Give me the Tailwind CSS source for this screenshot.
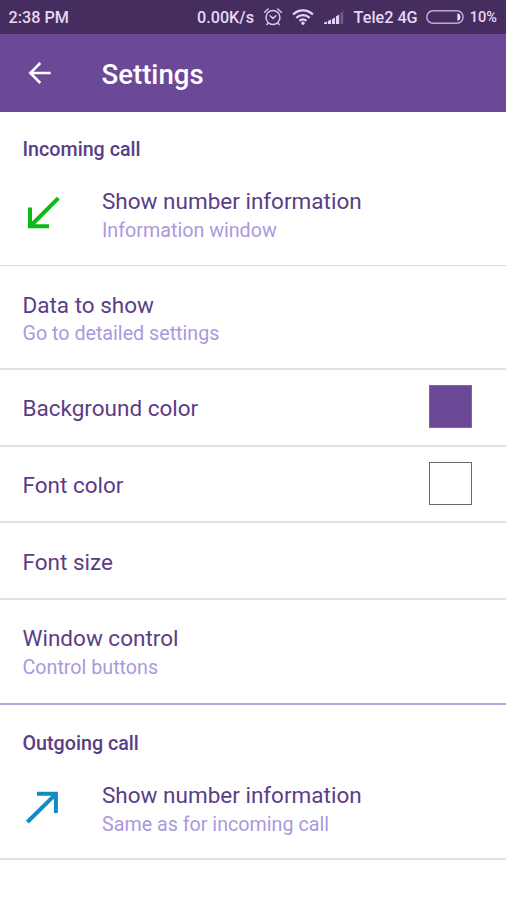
<!DOCTYPE html>
<html lang="en">
<head>
<meta charset="utf-8">
<title>Settings</title>
<script src="https://cdn.jsdelivr.net/npm/@tailwindcss/browser@4"></script>
</head>
<body class="bg-white">
<div class="flex h-[900px] w-[506px] flex-col overflow-hidden bg-white font-[Roboto,sans-serif] text-[#5b3d86]">
  <div class="flex h-[34px] shrink-0 items-center bg-[#452d60] pt-[2px] pr-[9px] pl-[8.5px] text-[16.2px] font-medium whitespace-nowrap text-[#e6d8f5]">
    <span class="w-[189px]">2:38 PM</span>
    <span class="w-[66px]">0.00K/s</span>
    <svg class="-mt-[3px] h-[20px] w-[20px]" viewBox="0 0 20 20" fill="none" stroke="#d9c8ec" stroke-width="1.5" stroke-linecap="round"><circle cx="10" cy="10.5" r="7"/><path d="M1.6 5.2 5.2 2M18.4 5.2 14.8 2M7 8.8 10 11.4 13 8.8M5 16 3.8 17.6M15 16l1.2 1.6"/></svg>
    <svg class="-mt-[3px] ml-[9px] h-[18px] w-[22px]" viewBox="0 0 22 18" fill="none" stroke="#e3d5f2" stroke-width="2.3"><path d="M1 6.5C6.8 1 15.2 1 21 6.5M4.3 9.8c4-3.7 9.4-3.7 13.4 0M7.5 12.9c2.2-1.9 4.8-1.9 7 0"/><circle cx="11" cy="15.2" r="1.7" fill="#e3d5f2" stroke="none"/></svg>
    <svg class="-mt-[2px] ml-[10px] h-[16px] w-[21px]" viewBox="0 0 21 16" fill="#e3d5f2"><path d="M0 15v-1.2L3 12.6V15zM4 15v-3l3-1.4V15zM8 15v-4.8l3-1.6V15zM12 15V7.6l3.2-2.2V15z"/><path d="M16.6 4.2 19.2 2v13h-2.6z" fill="#735c8c"/></svg>
    <span class="ml-[9px] w-[72.5px]">Tele2 4G</span>
    <svg class="-mt-[2px] h-[14px] w-[38px]" viewBox="0 0 38 14"><rect x=".8" y=".8" width="36.4" height="12.4" rx="6.2" fill="none" stroke="#bda9d3" stroke-width="1.5"/><path d="M31.5 3.2c4 .3 4 7.3 0 7.6z" fill="#f2eafa"/></svg>
    <span class="ml-[6px] text-[14.5px]">10%</span>
  </div>

  <header class="flex h-[78px] shrink-0 items-center bg-[#6c4996] text-white">
    <svg class="ml-[28px] h-[24px] w-[24px]" viewBox="0 0 24 24" fill="none" stroke="#fff" stroke-width="2.5"><path d="M22.7 12H2.5M12.3 2 2.3 12l10 10"/></svg>
    <h1 class="ml-[49.5px] pt-1 text-[27.6px] leading-8 font-medium">Settings</h1>
  </header>

  <section class="h-[154px] shrink-0 border-b border-[#d9d9d9] pt-[24px] pl-[22.5px]">
    <h2 class="text-[19.7px] leading-7 font-medium">Incoming call</h2>
    <div class="mt-6 flex">
      <svg class="mt-[7px] ml-[4.5px] h-[36px] w-[36px]" viewBox="0 0 36 36" fill="none" stroke="#0cbb12" stroke-width="4"><path d="M31.3 3.2 3.5 31M3 12.5v18.7h19"/></svg>
      <div class="-mt-px ml-[39px] leading-[29px]"><p class="text-[22.5px]">Show number information</p><p class="text-[19.7px] text-[#ab99dc]">Information window</p></div>
    </div>
  </section>

  <div class="h-[104px] shrink-0 border-b-2 border-[#e2e2e2] pt-[25px] pl-[22.5px]"><p class="text-[22.5px] leading-[29px]">Data to show</p><p class="text-[19.7px] leading-[28px] text-[#ab99dc]">Go to detailed settings</p></div>

  <div class="flex h-[77px] shrink-0 items-center justify-between border-b-2 border-[#e2e2e2] pr-[34px] pl-[22.5px]"><p class="pt-[3px] text-[22.5px]">Background color</p><span class="mb-[2px] h-[43px] w-[43px] border border-[#77707f] bg-[#6c4996]"></span></div>
  <div class="flex h-[76px] shrink-0 items-center justify-between border-b-2 border-[#e2e2e2] pr-[34px] pl-[22.5px]"><p class="pt-[4px] text-[22.5px]">Font color</p><span class="mb-[2px] h-[43px] w-[43px] border border-[#6b6b6b] bg-white"></span></div>
  <div class="flex h-[77px] shrink-0 items-center border-b-2 border-[#e2e2e2] pl-[22.5px]"><p class="pt-[4px] text-[22.5px]">Font size</p></div>

  <div class="h-[105px] shrink-0 border-b-2 border-[#b3a6dc] pt-[24px] pl-[22.5px] leading-[29px]"><p class="text-[22.5px]">Window control</p><p class="text-[19.7px] text-[#ab99dc]">Control buttons</p></div>

  <section class="h-[155px] shrink-0 border-b-2 border-[#e2e2e2] pt-[25px] pl-[22.5px]">
    <h2 class="text-[19.7px] leading-7 font-medium">Outgoing call</h2>
    <div class="mt-[23px] flex">
      <svg class="mt-[8px] ml-[3.5px] h-[36px] w-[36px]" viewBox="0 0 36 36" fill="none" stroke="#118bc3" stroke-width="4"><path d="M1.4 33 30 4.8M11 4.8h18.9V24"/></svg>
      <div class="ml-[40px] leading-[29px]"><p class="text-[22.5px]">Show number information</p><p class="text-[19.7px] text-[#ab99dc]">Same as for incoming call</p></div>
    </div>
  </section>
</div>
</body>
</html>
